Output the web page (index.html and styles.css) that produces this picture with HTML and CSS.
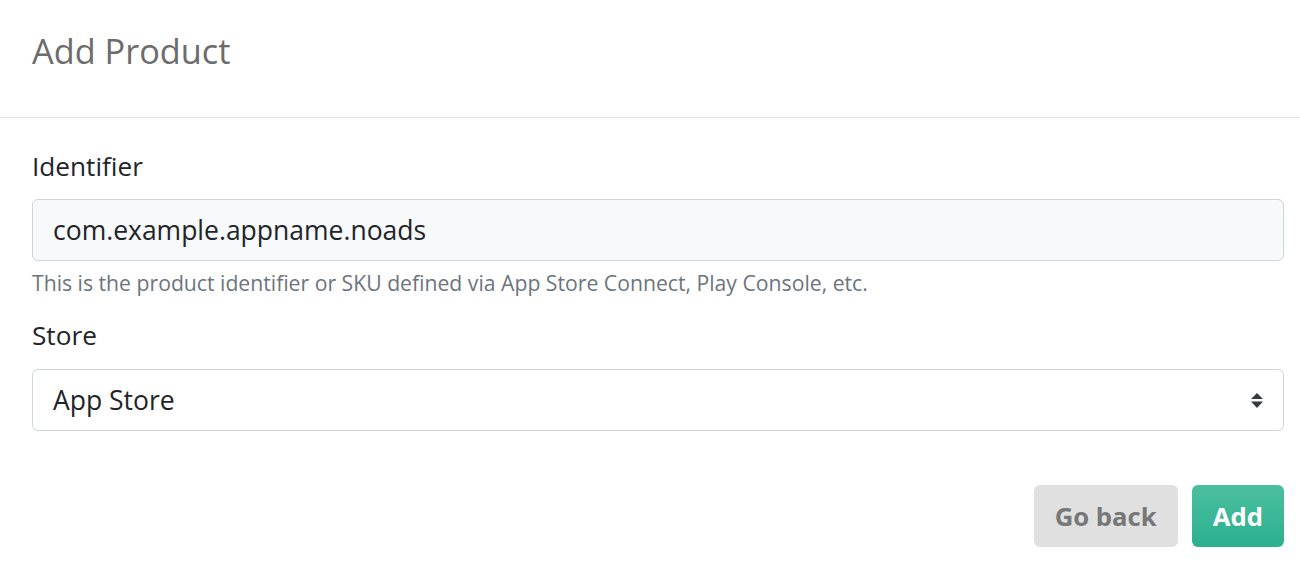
FILE: index.html
```html
<!DOCTYPE html>
<html>
<head>
<meta charset="utf-8">
<link rel="stylesheet" href="styles.css">
</head>
<body>
<div class="header">
  <h1 class="title">Add Product</h1>
</div>
<form class="body">
  <label class="label">Identifier</label>
  <div class="input">com.example.appname.noads</div>
  <div class="help">This is the product identifier or SKU defined via App Store Connect, Play Console, etc.</div>
  <label class="label label-store">Store</label>
  <div class="select">
    <span>App Store</span>
    <svg class="arrows" width="12" height="18" viewBox="0 0 12 18"><path d="M6 2 L12 8 H0 Z M6 17 L12 10.5 H0 Z" fill="#343a40"/></svg>
  </div>
  <div class="actions">
    <button type="button" class="btn btn-back">Go back</button>
    <button type="button" class="btn btn-add">Add</button>
  </div>
</form>
</body>
</html>
```
FILE: styles.css
```css
html, body {
  margin: 0;
  padding: 0;
  background: #fff;
}
body {
  font-family: "Open Sans", "DejaVu Sans", sans-serif;
  color: #212529;
}
.header {
  border-bottom: 1px solid #dee2e6;
  padding: 30px 32px 0;
  box-sizing: border-box;
  height: 118px;
}
.title {
  margin: 0;
  font-size: 34.3px;
  font-weight: 400;
  line-height: 42px;
  color: #6c6c6c;
}
.body {
  padding: 29px 16px 0 32px;
  display: flex;
  flex-direction: column;
}
.label {
  display: block;
  font-size: 26.2px;
  line-height: 39px;
  margin-bottom: 13px;
  color: #212529;
}
.label-store {
  margin-top: 18px;
  margin-bottom: 14px;
}
.input, .select {
  box-sizing: border-box;
  height: 62px;
  border: 1px solid #ced4da;
  border-radius: 6px;
  padding: 0 20px;
  font-size: 26.5px;
  display: flex;
  align-items: center;
  color: #212529;
}
.input {
  background: #f8f9fa;
}
.select {
  background: #fff;
  justify-content: space-between;
}
.help {
  margin-top: 6px;
  font-size: 21.2px;
  line-height: 31px;
  color: #6c757d;
}
.actions {
  display: flex;
  justify-content: flex-end;
  gap: 14px;
  margin-top: 54px;
}
.btn {
  height: 62px;
  border: none;
  border-radius: 6px;
  font-family: "Open Sans", "DejaVu Sans", sans-serif;
  font-weight: 700;
  font-size: 25.7px;
  padding: 0 21px;
}
.btn-back {
  background: #e0e0e0;
  color: #777;
}
.btn-add {
  background: linear-gradient(#4bbf9f, #2bb08f);
  color: #fff;
}
```
